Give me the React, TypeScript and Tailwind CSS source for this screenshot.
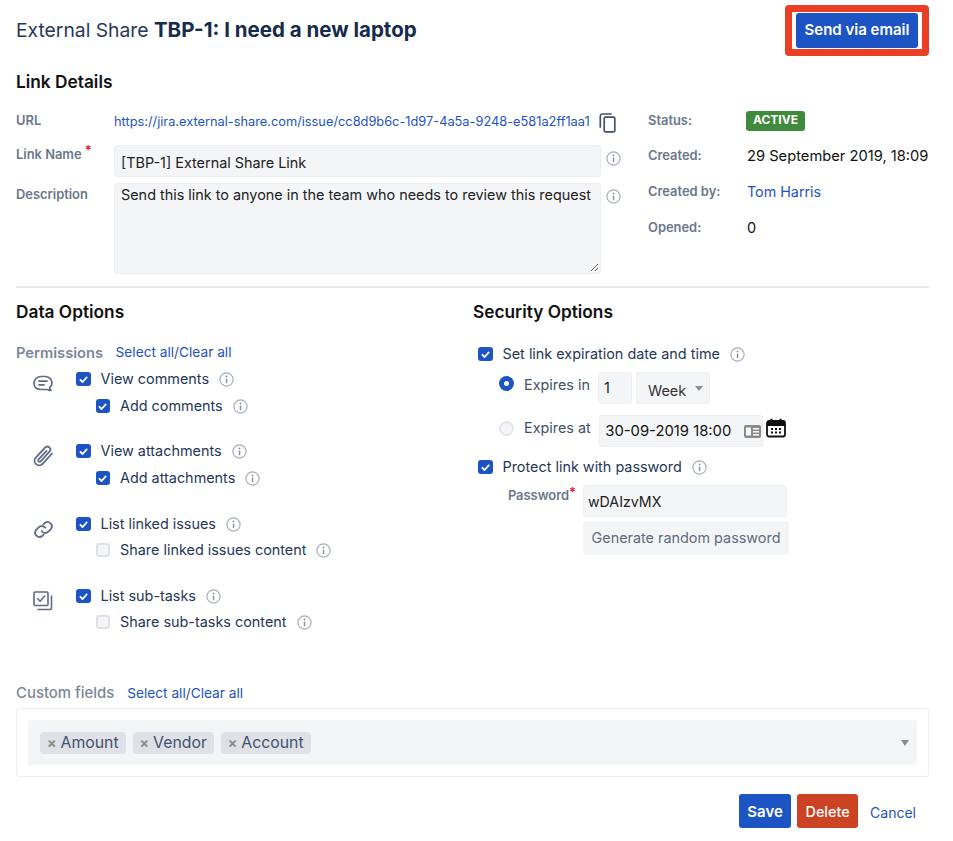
import React from "react";

const Info = () => (
  <svg width="15" height="15" viewBox="0 0 15 15" fill="none" className="shrink-0">
    <circle cx="7.5" cy="7.5" r="6.6" stroke="#a5adba" strokeWidth="1.2" />
    <rect x="6.8" y="6.4" width="1.5" height="4.8" rx="0.6" fill="#8993a4" />
    <circle cx="7.5" cy="4.5" r="0.95" fill="#8993a4" />
  </svg>
);

const Check = ({ on = true }: { on?: boolean }) =>
  on ? (
    <span className="flex h-[14.5px] w-[14.5px] shrink-0 items-center justify-center rounded-[3px] bg-[#1d54c4]">
      <svg width="11" height="11" viewBox="0 0 11 11" fill="none">
        <path d="M2.4 5.8 4.6 8 8.7 3.4" stroke="#fff" strokeWidth="1.8" strokeLinecap="round" strokeLinejoin="round" />
      </svg>
    </span>
  ) : (
    <span className="h-[14.5px] w-[14.5px] shrink-0 rounded-[3px] border-2 border-[#dfe1e6] bg-[#f4f5f7]" />
  );

const CheckRow = ({ label, on = true, className = "" }: { label: string; on?: boolean; className?: string }) => (
  <div className={`flex h-[20px] items-center ${className}`}>
    <Check on={on} />
    <span className="ml-[10px] mr-[10px] text-[14.4px] text-[#253858]">{label}</span>
    <Info />
  </div>
);

const Group = ({ icon, top, sub, subOn = true, gap, mb }: { icon: React.ReactNode; top: string; sub: string; subOn?: boolean; gap: string; mb: string }) => (
  <div className={`flex ${mb}`}>
    <div className="flex w-[60px] justify-end pr-[21px] pt-[3px]">
      <span className="flex h-[24px] w-[24px] items-center justify-center">{icon}</span>
    </div>
    <div className="flex flex-col">
      <CheckRow label={top} className={gap} />
      <CheckRow label={sub} on={subOn} className="ml-[19.5px]" />
    </div>
  </div>
);

const Label = ({ children, className = "" }: { children: React.ReactNode; className?: string }) => (
  <span className={`text-[12.9px] font-semibold text-[#6b778c] ${className}`}>{children}</span>
);

const Tag = ({ label }: { label: string }) => (
  <span className="flex h-[22px] items-center gap-[4px] rounded-[4px] bg-[#dfe1e6] pl-[7px] pr-[7px] text-[15.8px] text-[#42526e]">
    <span className="text-[14px] font-bold leading-none text-[#8c8c8c]">×</span>
    {label}
  </span>
);

export default function App() {
  return (
    <div className="h-[841px] w-[953px] overflow-hidden bg-white pl-4 pr-6 font-['Inter','Liberation_Sans',sans-serif] text-[14.4px] text-[#172b4d]">
      <header className="flex h-[60px] items-center justify-between pt-[1px]">
        <h1 className="text-[19.3px] font-normal text-[#253858]">
          External Share <strong className="text-[20.5px] font-bold text-[#172b4d]">TBP-1: I need a new laptop</strong>
        </h1>
        <div className="rounded-[4px] border-[7px] border-[#ea3f24] bg-white px-[4px] py-[1px]">
          <button className="flex h-[35px] w-[122px] items-center justify-center rounded-[3px] bg-[#1d54c4] text-[15px] font-semibold text-white">
            Send via email
          </button>
        </div>
      </header>

      <h2 className="mt-[11px] h-[22px] text-[17.3px] font-semibold leading-[22px] text-[#111]">Link Details</h2>

      <section className="mt-[16px] flex border-b-2 border-[#e6e8ec] pb-[12px]">
        <div className="w-[632px] shrink-0">
          <div className="flex h-[36px] items-start pt-[2px]">
            <Label className="w-[98px] leading-[20px]">URL</Label>
            <a className="mt-[2px] text-[12.8px] leading-[18px] text-[#1d54c4]">
              https://jira.external-share.com/issue/cc8d9b6c-1d97-4a5a-9248-e581a2ff1aa1
            </a>
            <svg width="20" height="22" viewBox="0 0 20 22" fill="none" className="ml-[8px] mt-[1px]" stroke="#42526e" strokeWidth="1.7">
              <path d="M13 2H4a2 2 0 0 0-1.7 2v11" strokeLinecap="round" />
              <rect x="6.2" y="5.2" width="10.6" height="14.6" rx="1.2" />
            </svg>
          </div>
          <div className="flex items-start">
            <Label className="w-[98px] pt-[2px] leading-[16px]">
              Link Name <span className="relative -top-[4px] text-[#e5202b]">*</span>
            </Label>
            <div className="flex h-[32px] w-[487px] items-center rounded-[3px] border border-[#eceef1] bg-[#f4f5f7] px-[6px] pt-[3px] text-[14.4px] text-[#222]">
              [TBP-1] External Share Link
            </div>
            <span className="ml-[5px] mt-[6px]"><Info /></span>
          </div>
          <div className="mt-[6px] flex items-start">
            <Label className="w-[98px] pt-[2px] leading-[20px]">Description</Label>
            <div className="relative h-[91px] w-[487px] rounded-[3px] border border-[#eceef1] bg-[#f4f5f7] px-[6px] pt-[1px] text-[14.4px] leading-[20px] text-[#222]">
              Send this link to anyone in the team who needs to review this request
              <svg width="9" height="9" viewBox="0 0 9 9" className="absolute bottom-[1px] right-[1px]" stroke="#555" strokeWidth="0.9">
                <path d="M1 8 8 1M5 8 8 5" />
              </svg>
            </div>
            <span className="ml-[5px] mt-[6px]"><Info /></span>
          </div>
        </div>

        <div className="w-[283px] shrink-0 pt-[2px]">
          {[
            ["Status:", <span key="a" className="relative -top-[2px] -ml-[1px] inline-block h-[20px] rounded-[3px] bg-[#3f8a3c] px-[7px] text-[12px] font-bold leading-[18px] text-white">ACTIVE</span>],
            ["Created:", <span key="b" className="text-[14.7px] text-[#111]">29 September 2019, 18:09</span>],
            ["Created by:", <a key="c" className="text-[14.3px] text-[#1d54c4]">Tom Harris</a>],
            ["Opened:", <span key="d" className="text-[14.5px] text-[#111]">0</span>],
          ].map(([k, v], i) => (
            <div key={i} className={`flex items-start ${i === 0 ? "h-[35px]" : "h-[36px]"}`}>
              <Label className="w-[99px] leading-[20px]">{k}</Label>
              <span className="whitespace-nowrap leading-[20px]">{v}</span>
            </div>
          ))}
        </div>
      </section>

      <section className="mt-[13px] flex">
        <div className="w-[457px] shrink-0">
          <h2 className="h-[22px] text-[17.3px] font-semibold leading-[22px] text-[#111]">Data Options</h2>
          <div className="mt-[19px] flex h-[20px] items-center leading-[20px]">
            <span className="pt-[2px] text-[14.7px] font-semibold text-[#7a869a]">Permissions</span>
            <span className="ml-[12.5px] text-[13.7px] text-[#1d54c4]">Select all</span>
            <span className="text-[13.7px] text-[#42526e]">/</span>
            <span className="text-[13.7px] text-[#1d54c4]">Clear all</span>
          </div>

          <div className="mt-[7px]">
            <Group
              gap="mb-[7px]"
              mb="mb-[25px]"
              top="View comments"
              sub="Add comments"
              icon={
                <svg width="22" height="20" viewBox="0 0 22 20" fill="none" stroke="#5e6c84" strokeWidth="1.7">
                  <path d="M15 15.5H9c-4 0-7-2-7-6s3-7 7-7h4c4 0 7 3 7 6.5 0 2-1 3.6-2.4 4.6.1 1.2.6 2.2 1.4 2.9-1.6 0-3-.4-3.6-1Z" strokeLinejoin="round" />
                  <path d="M7 7.2h8M7 10.8h5" strokeLinecap="round" />
                </svg>
              }
            />
            <Group
              gap="mb-[7px]"
              mb="mb-[26px]"
              top="View attachments"
              sub="Add attachments"
              icon={
                <svg width="24" height="24" viewBox="0 0 24 24" fill="none" stroke="#5e6c84" strokeWidth="1.8" strokeLinecap="round">
                  <path d="M21 9.5 11.6 19.8a4.6 4.6 0 0 1-6.8-6.2L14 3.6a3 3 0 0 1 4.5 4.1L9.6 17.3a1.4 1.4 0 0 1-2.1-1.9l8-8.6" />
                </svg>
              }
            />
            <Group
              gap="mb-[6px]"
              mb="mb-[26px]"
              top="List linked issues"
              sub="Share linked issues content"
              subOn={false}
              icon={
                <svg width="21" height="21" viewBox="0 0 24 24" fill="none" stroke="#5e6c84" strokeWidth="2.1" strokeLinecap="round">
                  <path d="M10 14a5 5 0 0 0 7.5.5l3-3a5 5 0 0 0-7-7l-1.7 1.7" />
                  <path d="M14 10a5 5 0 0 0-7.5-.5l-3 3a5 5 0 0 0 7 7l1.7-1.7" />
                </svg>
              }
            />
            <Group
              gap="mb-[6px]"
              mb="mb-0"
              top="List sub-tasks"
              sub="Share sub-tasks content"
              subOn={false}
              icon={
                <svg width="20" height="20" viewBox="0 0 20 20" fill="none" stroke="#5e6c84" strokeWidth="1.6">
                  <rect x="1" y="1" width="14" height="13.5" rx="1" />
                  <path d="M4.5 7.5 7.2 10.2 11.6 5" strokeLinecap="round" strokeLinejoin="round" />
                  <path d="M18.5 5v12a1.5 1.5 0 0 1-1.5 1.5H5" strokeLinecap="round" />
                </svg>
              }
            />
          </div>
        </div>

        <div className="flex-1">
          <h2 className="h-[22px] text-[17.3px] font-semibold leading-[22px] text-[#111]">Security Options</h2>
          <div className="ml-[5px] mt-[21px]">
            <CheckRow label="Set link expiration date and time" />
            <div className="ml-[21px] mt-[6px] flex h-[36px] items-center">
              <span className="mb-[9px] flex h-[15px] w-[15px] items-center justify-center rounded-full bg-[#1d54c4]">
                <span className="h-[5px] w-[5px] rounded-full bg-white" />
              </span>
              <span className="mb-[7px] ml-[10px] text-[14.4px] text-[#42526e]">Expires in</span>
              <span className="ml-[8px] flex h-[32px] w-[34px] items-center rounded-[3px] border border-[#eceef1] bg-[#f4f5f7] px-[5px] text-[#222]">1</span>
              <span className="ml-[4px] flex h-[32px] w-[74px] items-center rounded-[3px] border border-[#eceef1] bg-[#f4f5f7] pl-[11px] text-[14.4px] text-[#333]">
                <span className="pt-[5px]">Week</span>
                <span className="ml-[9px] h-0 w-0 border-x-[4px] border-t-[5px] border-x-transparent border-t-[#8c8c8c]" />
              </span>
            </div>
            <div className="ml-[21px] mt-[9px] flex h-[32px] items-center">
              <span className="mb-[6px] h-[15px] w-[15px] rounded-full border-2 border-[#e4e6ea] bg-[#f4f5f7]" />
              <span className="mb-[6px] ml-[10px] text-[14.4px] text-[#42526e]">Expires at</span>
              <span className="ml-[8.5px] flex h-[32px] w-[164px] items-center justify-between rounded-[3px] border border-[#eceef1] bg-[#f4f5f7] pl-[5px] pr-[1px] text-[14.8px] text-[#111]">
                30-09-2019 18:00
                <svg width="17" height="13" viewBox="0 0 17 13">
                  <rect x="0" y="0" width="17" height="13" rx="2" fill="#8a8a8a" />
                  <rect x="2" y="2.5" width="5" height="8" fill="#f4f5f7" />
                  <rect x="9" y="3" width="6" height="1.6" fill="#f4f5f7" />
                  <rect x="9" y="6" width="6" height="1.6" fill="#f4f5f7" />
                  <rect x="9" y="9" width="6" height="1.6" fill="#f4f5f7" />
                </svg>
              </span>
              <svg width="20" height="20" viewBox="0 0 20 20" className="mb-[6px] ml-[3px]">
                <rect x="1" y="3" width="18" height="15.5" rx="2" fill="none" stroke="#111" strokeWidth="1.8" />
                <rect x="1" y="3" width="18" height="5" fill="#111" />
                <rect x="4.5" y="0.8" width="2" height="4" fill="#111" />
                <rect x="13.5" y="0.8" width="2" height="4" fill="#111" />
                {[5, 9, 13].map((x) => (
                  <React.Fragment key={x}>
                    <rect x={x} y="10" width="2" height="2" fill="#111" />
                    <rect x={x} y="13.5" width="2" height="2" fill="#111" />
                  </React.Fragment>
                ))}
              </svg>
            </div>
            <CheckRow label="Protect link with password" className="mt-[10px]" />
          </div>
          <div className="mt-[8px] flex">
            <div className="flex h-[32px] w-[110px] justify-end pr-[7px] pt-[2px]">
              <Label className="leading-[18px]">
                Password<span className="relative -top-[3px] text-[#e5202b]">*</span>
              </Label>
            </div>
            <div className="flex flex-col">
              <div className="flex h-[32px] w-[204px] items-center rounded-[3px] border border-[#eceef1] bg-[#f4f5f7] px-[4px] pt-[2px] text-[14.2px] text-[#222]">
                wDAIzvMX
              </div>
              <button className="mt-[4px] h-[34px] w-[206px] rounded-[3px] bg-[#f4f5f7] text-center text-[14.4px] text-[#5e6c84]">
                Generate random password
              </button>
            </div>
          </div>
        </div>
      </section>

      <div className="mt-[51px] flex h-[20px] items-center leading-[20px]">
        <span className="text-[14.9px] font-medium text-[#7a869a]">Custom fields</span>
        <span className="ml-[13px] text-[13.7px] text-[#1d54c4]">Select all</span>
        <span className="text-[13.7px] text-[#42526e]">/</span>
        <span className="text-[13.7px] text-[#1d54c4]">Clear all</span>
      </div>
      <div className="mt-[5px] rounded-[3px] border border-[#eceef1] p-[11px]">
        <div className="flex h-[45px] items-center gap-[7px] rounded-[3px] bg-[#f4f5f7] pl-[12px] pr-[8px]">
          <Tag label="Amount" />
          <Tag label="Vendor" />
          <Tag label="Account" />
          <span className="ml-auto h-0 w-0 border-x-[4px] border-t-[6px] border-x-transparent border-t-[#8c8c8c]" />
        </div>
      </div>

      <div className="mt-[17px] flex items-center justify-end gap-[6px] pr-[13px]">
        <button className="h-[34px] w-[52px] rounded-[3px] bg-[#1d54c4] pt-[2px] text-[15px] font-semibold text-white">Save</button>
        <button className="h-[34px] w-[61px] rounded-[3px] bg-[#cc4323] pt-[2px] text-[14.4px] font-medium text-white">Delete</button>
        <a className="ml-[6px] pt-[2px] text-[14px] text-[#1d54c4]">Cancel</a>
      </div>
    </div>
  );
}
